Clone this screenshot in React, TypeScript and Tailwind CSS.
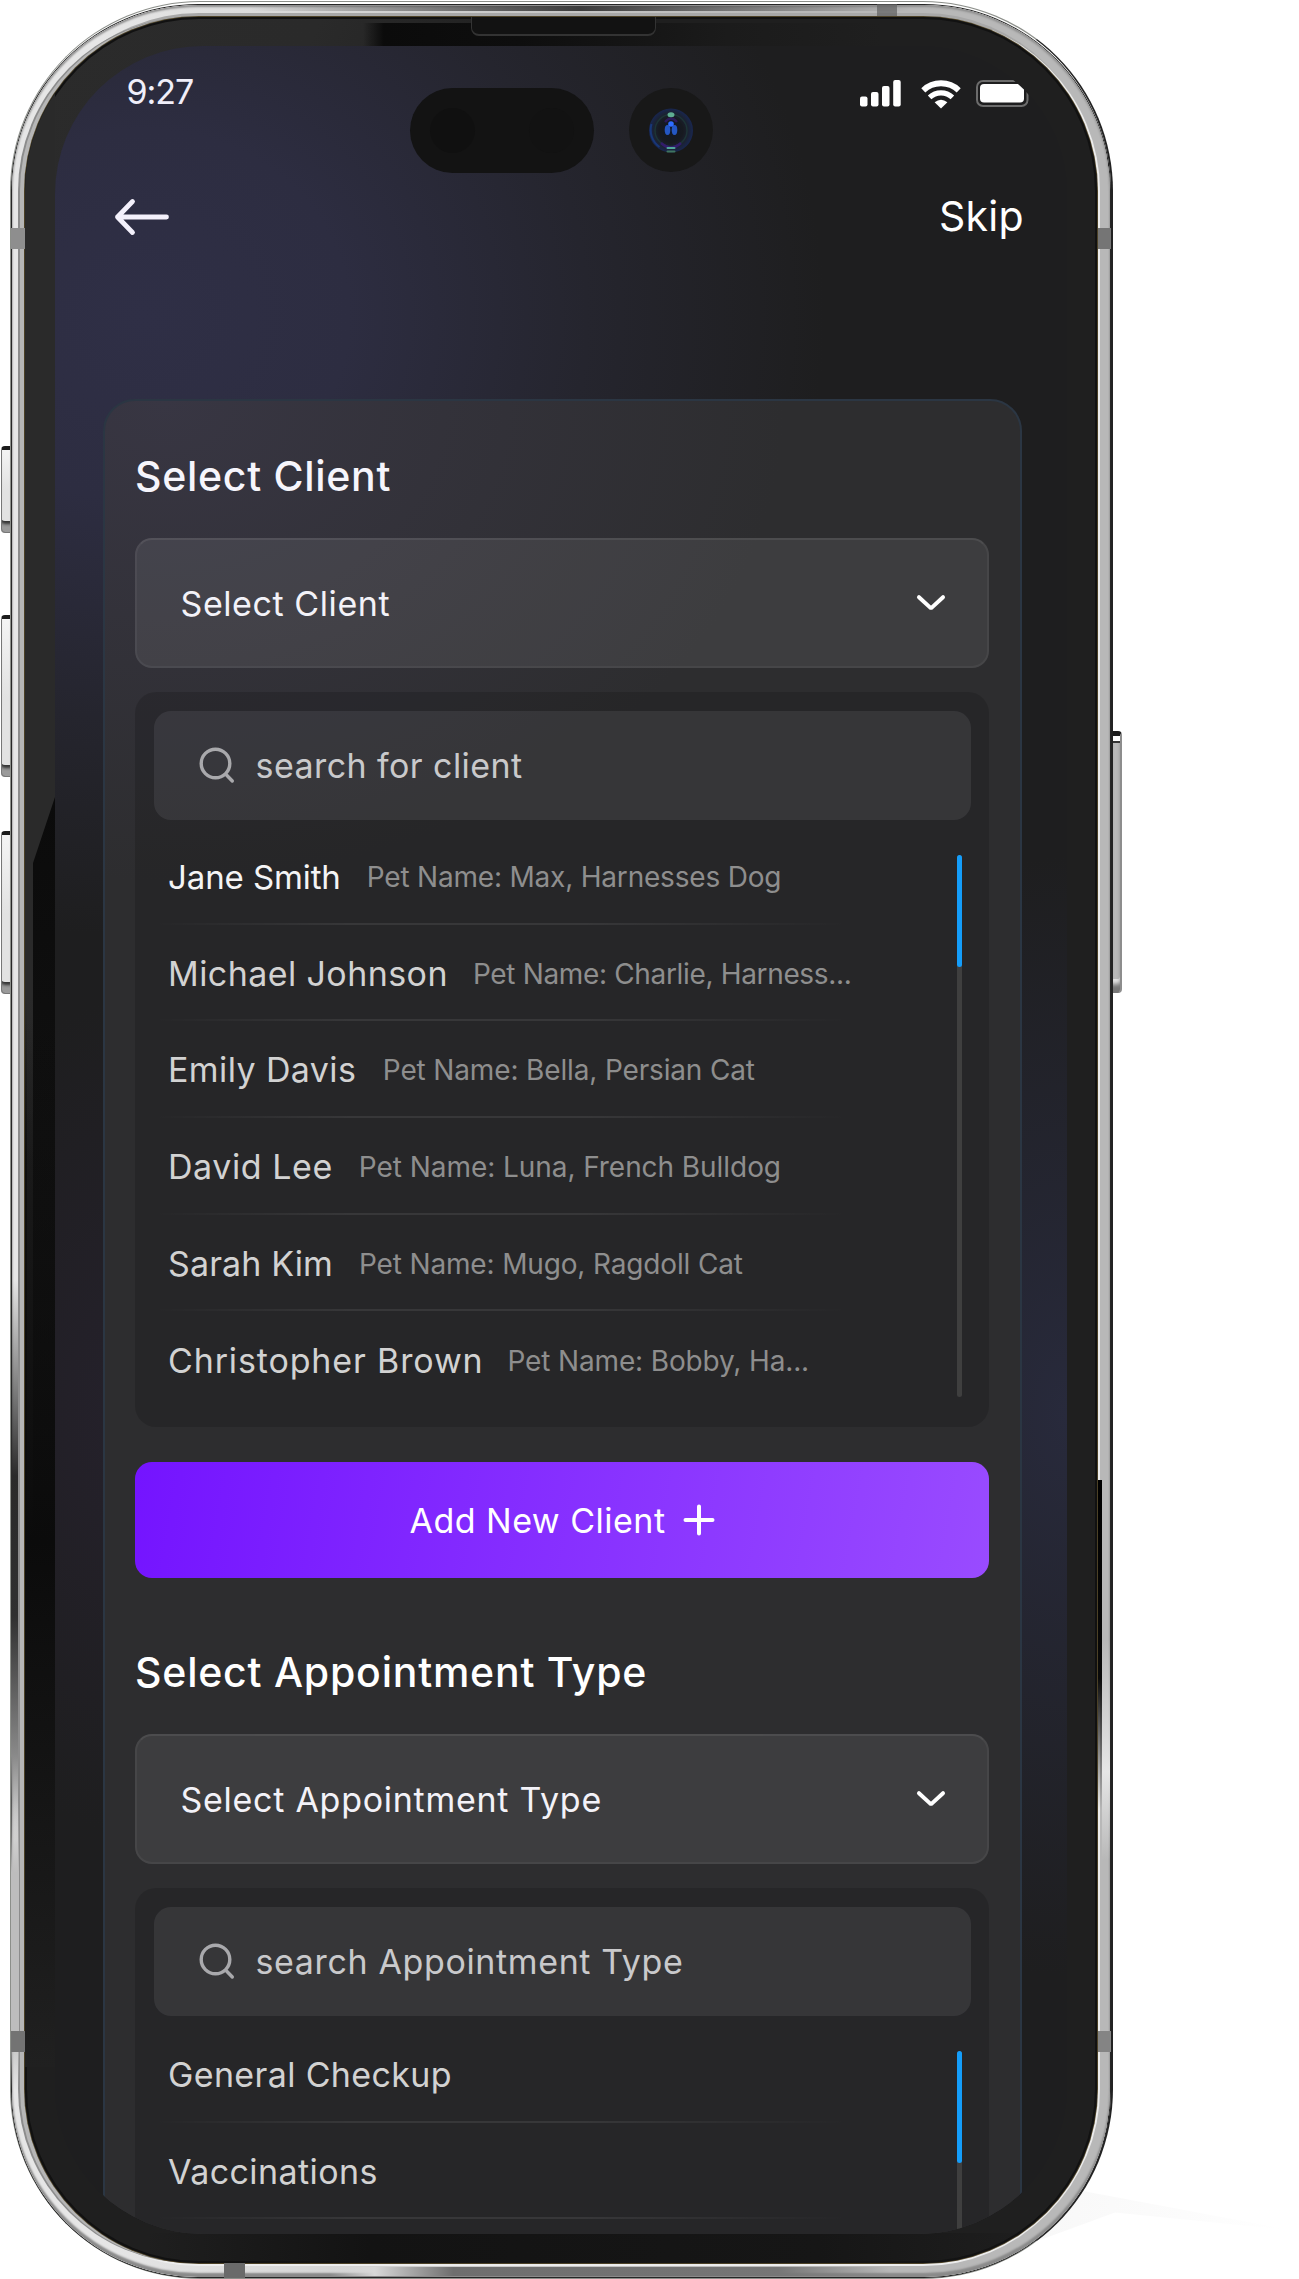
import type { ReactNode } from "react";

type Client = {
  name: string;
  nameClass: string;
  pet?: string;
  petClass?: string;
};

const clients: Client[] = [
  {
    name: "Jane Smith",
    nameClass: "text-[33px] tracking-[-0.1px] text-[#f4f4f5]",
    pet: "Pet Name: Max, Harnesses Dog",
    petClass: "ml-[26px] tracking-[-0.2px]",
  },
  {
    name: "Michael Johnson",
    nameClass: "text-[34px] tracking-[0.42px] text-[#d2d2d2]",
    pet: "Pet Name: Charlie, Harness...",
    petClass: "ml-[25px] tracking-[-0.34px]",
  },
  {
    name: "Emily Davis",
    nameClass: "text-[34px] tracking-[0.4px] text-[#d2d2d2]",
    pet: "Pet Name: Bella, Persian Cat",
    petClass: "ml-[26.5px] tracking-[-0.15px]",
  },
  {
    name: "David Lee",
    nameClass: "text-[34px] tracking-[0.57px] text-[#d2d2d2]",
    pet: "Pet Name: Luna, French Bulldog",
    petClass: "ml-[26px] tracking-[-0.06px]",
  },
  {
    name: "Sarah Kim",
    nameClass: "text-[34px] tracking-[0.12px] text-[#d2d2d2]",
    pet: "Pet Name: Mugo, Ragdoll Cat",
    petClass: "ml-[26px] tracking-[-0.15px]",
  },
  {
    name: "Christopher Brown",
    nameClass: "text-[34px] tracking-[0.86px] text-[#d2d2d2]",
    pet: "Pet Name: Bobby, Ha...",
    petClass: "ml-[24px] tracking-[-0.15px]",
  },
];

const appointmentTypes: Client[] = [
  { name: "General Checkup", nameClass: "text-[34px] tracking-[0.36px] text-[#d2d2d2]" },
  { name: "Vaccinations", nameClass: "text-[34px] tracking-[0.42px] text-[#d2d2d2]" },
];

function SearchIcon() {
  return (
    <svg width="37" height="37" viewBox="0 0 37 37" fill="none" stroke="#a9a9ac" strokeWidth="3.4" strokeLinecap="round">
      <circle cx="17.5" cy="16.5" r="14.3" />
      <path d="M28.5 28l5.800 6" />
    </svg>
  );
}

function Chevron() {
  return (
    <svg width="30" height="18" viewBox="0 0 30 18" fill="none" stroke="#fff" strokeWidth="4" strokeLinecap="round" strokeLinejoin="round">
      <path d="M3 3.2l11 10.2q1 .8 2 0L27 3.2" />
    </svg>
  );
}

function StatusIcons() {
  return (
    <div className="flex items-start">
      <svg width="41" height="27" viewBox="0 0 41 27" fill="#fff">
        <rect x="0" y="16.5" width="7.5" height="10" rx="2" />
        <rect x="11" y="12" width="7.5" height="14.5" rx="2" />
        <rect x="22" y="6" width="7.5" height="20.5" rx="2" />
        <rect x="33.2" y="0" width="7.5" height="26.5" rx="2" />
      </svg>
      <svg className="ml-[20px]" width="40" height="29" viewBox="0 0 40 29" fill="none" stroke="#fff">
        <path d="M2.3 10.3C12 0.9 28 0.9 37.7 10.3" strokeWidth="5.8" />
        <path d="M8.600 17.4C15 11.4 25 11.4 31.400 17.4" strokeWidth="5.200" />
        <path d="M13.600 22.3q6.4-5 12.8 0L20 28.6z" fill="#fff" stroke="none" />
      </svg>
      <svg className="ml-[15px]" width="57" height="27" viewBox="0 0 57 27">
        <rect x="1" y="1" width="50.5" height="25" rx="6" fill="none" stroke="#6c6c6c" strokeWidth="2" />
        <rect x="4" y="4" width="44" height="18.5" rx="4" fill="#fff" />
      </svg>
    </div>
  );
}

function SelectBox({ children }: { children: ReactNode }) {
  return (
    <div className="mt-[38px] flex h-[130px] shrink-0 items-center justify-between rounded-[17px] border-2 border-white/5 border-t-white/8 bg-white/8 pr-[41px] pl-[43.5px] text-[#f3f2f8]">
      {children}
      <Chevron />
    </div>
  );
}

function Rows({ items, openEnded, className }: { items: Client[]; openEnded?: boolean; className: string }) {
  return (
    <ul className={className}>
      {items.map((item, i) => (
        <li key={item.name} className="flex h-[96.7px] flex-col">
          <div className="flex flex-1 items-center pt-[3px] pl-[14.5px] leading-[44px] whitespace-nowrap">
            <span className={item.nameClass}>{item.name}</span>
            {item.pet && (
              <span className={`text-[28px] text-[#8e8e8e] ${item.petClass}`}>{item.pet}</span>
            )}
          </div>
          {(openEnded || i < items.length - 1) && (
            <div className="h-[2px] w-[695px] bg-linear-[to_right,transparent_0,#ffffff14_28%,#ffffff14_62%,transparent_100%]" />
          )}
        </li>
      ))}
    </ul>
  );
}

type DropdownProps = {
  placeholder: ReactNode;
  items: Client[];
  openEnded?: boolean;
  rowsClass: string;
};

function Dropdown({ placeholder, items, openEnded, rowsClass }: DropdownProps) {
  return (
    <div className="mt-[24px] h-[735px] shrink-0 rounded-[21px] bg-black/15 pt-[19px] pr-[18.5px] pl-[18.5px]">
      <div className="flex h-[109px] items-center rounded-[17px] bg-[#f0f0ff]/8 pl-[44.5px] text-[#c9c9cb]">
        <SearchIcon />
        {placeholder}
      </div>
      <div className="flex justify-between pr-[9px]">
        <Rows items={items} openEnded={openEnded} className={rowsClass} />
        <div className="mt-[35px] h-[542px] w-[4.5px] rounded-full bg-[#3f3f3f]">
          <div className="h-[111.5px] rounded-full bg-[#149dfa]" />
        </div>
      </div>
    </div>
  );
}

function SideKeys() {
  const key =
    "absolute left-[1px] w-[10px] rounded-l-[4px] border border-[#777] border-t-[4px] border-t-[#1c1c1c] bg-linear-to-b from-[#f4f4f4] via-[#e2e2e2] to-[#e2e2e2] shadow-[inset_0_-10px_3px_-2px_#9a9a9a,inset_0_-12px_0_-1px_#333]";
  return (
    <>
      <div className={`${key} top-[446px] h-[87px]`} />
      <div className={`${key} top-[615px] h-[162px]`} />
      <div className={`${key} top-[831px] h-[163px]`} />
      <div className="absolute top-[731px] left-[1111px] h-[262px] w-[11px] rounded-r-[4px] border-t-[5px] border-r-2 border-t-[#1c1c1c] border-r-[#8d8d8d] bg-[#b9b9b9] shadow-[inset_0_5px_0_#fff,inset_0_7px_0_#333,inset_0_-10px_4px_-1px_#777,inset_0_-14px_0_#e4e4e4]" />
    </>
  );
}

function MetalReflections() {
  return (
    <>
      <div className="absolute top-[1280px] left-[11px] h-[560px] w-[7px] bg-linear-[to_bottom,#2a2a2a00_0,#2a2a2a_35%,#303030_60%,#8a8a8a_85%,#b8b8b800_100%]" />
      <div className="absolute top-[1800px] left-[11px] h-[290px] w-[8px] bg-linear-[to_bottom,#b4b4b400_0,#bdbdbd_25%,#bdbdbd_80%,#bdbdbd00_100%]" />
      <div className="absolute top-[1480px] left-[1098px] h-[330px] w-[4px] bg-linear-[to_bottom,#000_0,#0a0a0a_60%,#0a0a0a00_100%]" />
      <div className="absolute top-[1640px] left-[1102px] h-[220px] w-[8px] bg-linear-[to_bottom,#e6e6e600_0,#e6e6e6_60%,#c8c8c800_100%]" />
      <div className="absolute top-[2267px] left-[330px] h-[9px] w-[560px] bg-linear-[to_right,#e0e0e000_0,#d8d8d8_8%,#6e6e6e_22%,#767676_80%,#8a8a8a00_100%]" />
      <div className="absolute top-[6px] left-[250px] h-[5px] w-[660px] bg-linear-[to_right,#77777700_0,#3c3c3c_50%,#55555500_100%]" />
    </>
  );
}

function AntennaBands() {
  return (
    <>
      <div className="absolute top-[228px] left-[11px] h-[21px] w-[14px] bg-[#8e8e8e]" />
      <div className="absolute top-[228px] left-[1098px] h-[21px] w-[13px] bg-[#757575]" />
      <div className="absolute top-[2031px] left-[11px] h-[21px] w-[14px] bg-[#737373]" />
      <div className="absolute top-[2031px] left-[1098px] h-[21px] w-[13px] bg-[#848484]" />
      <div className="absolute top-[4px] left-[877px] h-[12px] w-[20px] bg-[#606060]/70" />
      <div className="absolute top-[2263px] left-[224px] h-[15px] w-[21px] bg-[#6a6a6a]" />
    </>
  );
}

function Cameras() {
  return (
    <>
      <div className="absolute top-[88px] left-[409.5px] h-[84.5px] w-[184.5px] rounded-full bg-[#131313]">
        <div className="absolute top-[20px] left-[20px] size-[45px] rounded-full bg-[#101010]" />
        <div className="absolute top-[20px] right-[20px] size-[45px] rounded-full bg-[#121212]" />
      </div>
      <svg className="absolute top-[88px] left-[629px]" width="84" height="84" viewBox="0 0 84 84">
        <defs>
          <radialGradient id="lens">
            <stop offset="0" stopColor="#101726" />
            <stop offset=".55" stopColor="#171a20" />
            <stop offset=".8" stopColor="#1b2233" />
            <stop offset="1" stopColor="#182650" />
          </radialGradient>
        </defs>
        <circle cx="42" cy="42" r="42" fill="#181818" />
        <circle cx="42" cy="42.5" r="22" fill="url(#lens)" />
        <circle cx="42" cy="42.5" r="16" fill="none" stroke="#1d3436" strokeWidth="1.5" />
        <path d="M22.5 36a21 21 0 0 0 8 23" fill="none" stroke="#17449b" strokeWidth="2" opacity=".6" />
        <path d="M32 55q10 9 20 0" fill="none" stroke="#331c6c" strokeWidth="2.5" />
        <path d="M36 34q6-7 12 0" fill="none" stroke="#2d1a58" strokeWidth="2.5" />
        <ellipse cx="42" cy="26.700" rx="3.500" ry="2.500" fill="#5fae93" />
        <ellipse cx="38.500" cy="42" rx="2.800" ry="5" fill="#2457c4" />
        <ellipse cx="45.500" cy="42" rx="2.800" ry="5" fill="#2457c4" />
        <circle cx="42" cy="36" r="2.800" fill="#2f6dff" />
        <rect x="37.500" y="59" width="9" height="2" rx="1" fill="#51a69b" />
        <rect x="37.500" y="62.500" width="9" height="2" rx="1" fill="#3f7560" />
      </svg>
    </>
  );
}

function BezelReflections() {
  return (
    <>
      <div className="absolute top-[60px] left-0 h-[1080px] w-[30px] bg-linear-to-b from-[#2a2a2a] from-85% to-[#2a2a2a]/0" />
      <div className="absolute top-[780px] left-[8px] h-[1100px] w-[22px] bg-linear-to-b from-[#0b0b0b] via-[#131313] to-[#1b1b1b] [clip-path:polygon(100%_0,100%_100%,0_100%,0_6%)]" />
      <div className="absolute top-[1000px] left-0 h-[1050px] w-[30px] bg-linear-to-b from-[#141414]/0 via-[#0b0b0b] to-[#202020]" />
      <div className="absolute top-[6px] left-[338px] h-[26px] w-[520px] bg-linear-[to_right,#20202000_0,#0b0b0b_4%,#0e0e0e_30%,#1b1b1b_70%,#1f1f1f00_100%]" />
      <div className="absolute bottom-0 left-[120px] h-[30px] w-[900px] bg-linear-[to_right,#16161600_0,#131313_25%,#161616_75%,#1b1b1b00_100%]" />
      <div className="absolute top-0 left-[446px] h-[19px] w-[185px] rounded-b-[8px] border-x border-b-2 border-[#333] bg-[#121212]" />
    </>
  );
}

export default function App() {
  return (
    <div className="relative flex h-[2279px] w-[1299px] overflow-hidden bg-white font-['Inter','Liberation_Sans',sans-serif]">
      <div className="absolute top-[2190px] left-[1040px] h-[50px] w-[250px] bg-linear-to-r from-[#f8f8f8] to-white [clip-path:polygon(15%_0,100%_80%,30%_45%,0_100%)]" />
      <SideKeys />

      {/* Metal shell */}
      <div className="relative mt-px ml-[10px] flex h-[2278px] w-[1103px] shrink-0 rounded-[190px] border border-r-2 border-[#8c8f8a] border-r-[#222] bg-white px-px pt-[3px] pb-px">
        <div className="flex flex-1 rounded-[186px] bg-linear-[to_right,#e6e6e6_0,#e6e6e6_8%,#c9c9c9_45%,#b8b8b8_70%,#b8b8b8_100%] pt-[12px] pr-[13px] pb-[14px] pl-[13px] shadow-[0_0_0_1px_#262626,inset_0_-4px_2px_#8a8a8a,inset_0_2px_2px_#8f8f8f]">
          <div className="relative flex flex-1 rounded-[174px] bg-[#1f1f1f] pt-[29px] pr-[30px] pb-[29px] pl-[30px] shadow-[0_0_0_1px_#4c4126,-5px_0_0_0_#b6b6b6,-7px_0_0_0_#8c8c8c,3px_0_0_0_#ececec,0_3px_0_0_#ededed,0_-4px_0_0_#a8a8a8]">
            <div className="absolute inset-0 overflow-hidden rounded-[174px] bg-linear-[115deg,#2b2b2b_0,#2a2a2a_14%,#1f1f1f_26%,#1f1f1f_100%] shadow-[inset_0_0_0_2px_#111]">
              <BezelReflections />
            </div>

            {/* Screen */}
            <main className="relative flex flex-1 flex-col overflow-hidden rounded-[148px] bg-[#1e1e1f] bg-[radial-gradient(680px_620px_at_90px_270px,#2f2f46_0%,#2d2d41_30%,#25252e_65%,#1e1e1f00_100%),radial-gradient(320px_560px_at_1013px_1370px,#282a3c_0%,#25273400_100%),radial-gradient(260px_420px_at_90px_1370px,#25212c_0%,#25212c00_100%)]">
              <div className="mt-[33px] mr-[34.5px] ml-[71.5px] flex h-[28px] shrink-0 justify-between">
                <span className="-mt-px text-[34px] leading-[28px] tracking-[-1.04px] text-[#f0effa]">9:27</span>
                <div className="pt-px">
                  <StatusIcons />
                </div>
              </div>
              <div className="mt-[83px] mr-[43px] ml-[59px] flex h-[52px] shrink-0 items-center justify-between">
                <svg className="mt-px" width="56" height="38" viewBox="0 0 56 38" fill="none" stroke="#f3f0fb" strokeWidth="4.800" strokeLinecap="round" strokeLinejoin="round">
                  <path d="M18.500 3.500L3.500 19l15 15.500M3.500 19h49" />
                </svg>
                <span className="text-[41px] leading-[52px] tracking-[0.3px] text-white">Skip</span>
              </div>

              <section className="mt-[157px] ml-[47.5px] flex h-[2100px] w-[919px] shrink-0 flex-col rounded-t-[32px] border-2 border-[#2b3643] bg-[#2d2d2f] bg-[radial-gradient(620px_480px_at_60px_0px,#383643_0%,#2d2d2f_100%)] px-[30.5px] pt-[51px]">
                <h2 className="h-[48px] shrink-0 text-[41px] leading-[48px] font-medium tracking-[0.7px] text-[#f6f5fc]">
                  Select Client
                </h2>
                <SelectBox>
                  <span className="text-[34px] tracking-[0.58px]">Select Client</span>
                </SelectBox>
                <Dropdown
                  placeholder={<span className="ml-[20.500px] text-[34px] tracking-[0.43px]">search for client</span>}
                  items={clients}
                  rowsClass="mt-[8px]"
                />
                <button className="mt-[35px] flex h-[116px] shrink-0 items-center justify-center gap-[17px] rounded-[17px] bg-linear-[100deg,#7414ff,#994bff] text-white">
                  <span className="text-[34px] tracking-[0.49px]">Add New Client</span>
                  <svg width="32" height="32" viewBox="0 0 32 32" stroke="#fff" strokeWidth="4" strokeLinecap="round">
                    <path d="M16 2.500v27M2.500 16h27" />
                  </svg>
                </button>
                <h2 className="mt-[70px] h-[48px] shrink-0 text-[41px] leading-[48px] font-medium tracking-[0.78px] text-white">
                  Select Appointment Type
                </h2>
                <SelectBox>
                  <span className="text-[34px] tracking-[0.73px]">Select Appointment Type</span>
                </SelectBox>
                <Dropdown
                  placeholder={<span className="ml-[20.500px] text-[34px] tracking-[0.63px]">search Appointment Type</span>}
                  items={appointmentTypes}
                  openEnded
                  rowsClass="mt-[10px]"
                />
              </section>
            </main>
          </div>
        </div>
      </div>

      <MetalReflections />
      <AntennaBands />
      <Cameras />
    </div>
  );
}
